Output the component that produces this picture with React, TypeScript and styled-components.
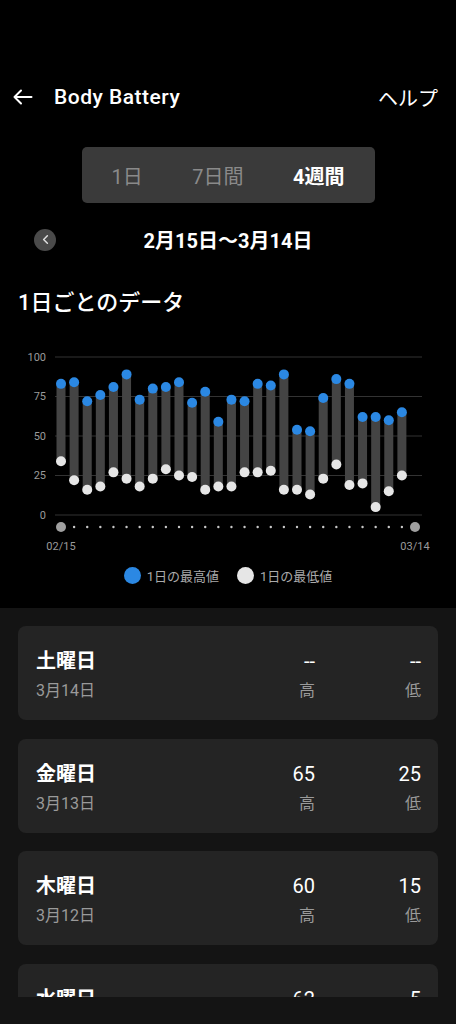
import React from "react";
import styled, { createGlobalStyle } from "styled-components";
import { ChevronLeft } from "lucide-react";

const GlobalStyle = createGlobalStyle`
  html, body { margin: 0; padding: 0; background: #000; }
  body {
    font-family: Roboto, "Noto Sans CJK JP", sans-serif;
    color: #fff;
  }
`;

const Page = styled.div`
  width: 456px;
  height: 1024px;
  display: flex;
  flex-direction: column;
  overflow: hidden;
  background: #000;
`;

const Header = styled.header`
  margin-top: 73px;
  height: 48px;
  display: flex;
  align-items: center;
  justify-content: space-between;
  padding: 0 18px 0 13px;
  flex-shrink: 0;
`;

const HeaderLeft = styled.div`
  display: flex;
  align-items: center;
  gap: 21px;
`;

const Title = styled.h1`
  margin: 0;
  font-size: 21px;
  font-weight: 500;
  letter-spacing: 0.5px;
`;

const HelpLink = styled.span`
  font-size: 20px;
  font-family: "Noto Sans CJK JP", sans-serif;
`;

const Segmented = styled.div`
  margin: 26px auto 0;
  width: 293px;
  height: 56px;
  box-sizing: border-box;
  padding: 0 30px;
  background: #3a3a3a;
  border-radius: 5px;
  display: flex;
  align-items: center;
  justify-content: space-between;
  flex-shrink: 0;
`;

const SegItem = styled.span<{ $active?: boolean }>`
  font-size: 20px;
  color: ${(p) => (p.$active ? "#fff" : "#8a8a8a")};
  font-weight: ${(p) => (p.$active ? 700 : 400)};
`;

const DateRow = styled.div`
  margin-top: 22px;
  height: 24px;
  padding: 0 34px;
  display: grid;
  grid-template-columns: 1fr auto 1fr;
  align-items: center;
  flex-shrink: 0;
`;

const BackCircle = styled.div`
  width: 22px;
  height: 22px;
  border-radius: 50%;
  background: #4a4a4a;
  display: flex;
  align-items: center;
  justify-content: center;
  justify-self: start;
  color: #e0e0e0;
`;

const DateText = styled.span`
  font-size: 20px;
  font-weight: 700;
`;

const Heading = styled.h2`
  margin: 39px 0 0;
  padding-left: 18px;
  font-size: 22px;
  line-height: 30px;
  font-weight: 500;
  flex-shrink: 0;
`;

const ChartSvg = styled.svg`
  display: block;
  margin-top: 12px;
  flex-shrink: 0;
`;

const Legend = styled.div`
  margin-top: 10px;
  height: 18px;
  display: flex;
  justify-content: center;
  align-items: center;
  gap: 18px;
  flex-shrink: 0;
`;

const LegendItem = styled.div`
  display: flex;
  align-items: center;
  gap: 6px;
  font-size: 13px;
  color: #aaa;
`;

const Swatch = styled.span<{ $color: string }>`
  width: 17px;
  height: 17px;
  border-radius: 50%;
  background: ${(p) => p.$color};
`;

const ListSection = styled.section`
  margin-top: 24px;
  flex: 1;
  min-height: 0;
  overflow: hidden;
  background: #141414;
  padding: 18px 18px 0;
  display: flex;
  flex-direction: column;
  gap: 18.5px;
`;

const NavBar = styled.div`
  height: 27px;
  flex-shrink: 0;
  background: #141414;
`;

const Card = styled.div`
  height: 94px;
  flex-shrink: 0;
  box-sizing: border-box;
  padding: 22px 17px 0 18px;
  background: #242424;
  border-radius: 8px;
  display: flex;
`;

const DayCol = styled.div`
  flex: 1;
  display: flex;
  flex-direction: column;
  gap: 6px;
`;

const DayName = styled.span`
  font-size: 20px;
  line-height: 26px;
  font-weight: 700;
`;

const SubText = styled.span`
  font-size: 16px;
  line-height: 22px;
  color: #9a9a9a;
`;

const Stats = styled.div`
  display: flex;
  gap: 46px;
`;

const StatCol = styled.div`
  width: 60px;
  display: flex;
  flex-direction: column;
  align-items: flex-end;
  gap: 6px;
`;

const StatValue = styled.span`
  font-size: 20px;
  line-height: 26px;
`;

const highs = [83, 84, 72, 76, 81, 89, 73, 80, 81, 84, 71, 78, 59, 73, 72, 83, 82, 89, 54, 53, 74, 86, 83, 62, 62, 60, 65];
const lows = [34, 22, 16, 18, 27, 23, 18, 23, 29, 25, 24, 16, 18, 18, 27, 27, 28, 16, 16, 13, 23, 32, 19, 20, 5, 15, 25];

const X0 = 61;
const STEP = (415 - 61) / 27;
const yOf = (v: number) => 185 - 1.58 * v;

const Chart: React.FC = () => {
  const grid = [100, 75, 50, 25, 0];
  return (
    <ChartSvg width={456} height={226} viewBox="0 0 456 226">
      {grid.map((g) => (
        <g key={g}>
          <line x1={55} x2={422} y1={yOf(g)} y2={yOf(g)} stroke="#333" strokeWidth={1} />
          <text
            x={46}
            y={yOf(g)}
            fill="#9a9a9a"
            fontSize={11}
            textAnchor="end"
            dominantBaseline="central"
            fontFamily="Roboto, sans-serif"
          >
            {g}
          </text>
        </g>
      ))}
      {highs.map((h, i) => {
        const cx = X0 + i * STEP;
        const yt = yOf(h);
        const yb = yOf(lows[i]);
        return (
          <g key={i}>
            <rect x={cx - 4.5} y={yt} width={9} height={yb - yt} fill="#444" />
            <circle cx={cx} cy={yt} r={5} fill="#2b88e3" />
            <circle cx={cx} cy={yb} r={5} fill="#e6e6e6" />
          </g>
        );
      })}
      {Array.from({ length: 28 }).map((_, i) => {
        const cx = X0 + i * STEP;
        const big = i === 0 || i === 27;
        return <circle key={i} cx={cx} cy={197} r={big ? 5 : 1.2} fill={big ? "#a0a0a0" : "#c8c8c8"} />;
      })}
      <text x={61} y={216} fill="#9a9a9a" fontSize={11} textAnchor="middle" dominantBaseline="central" fontFamily="Roboto, sans-serif">
        02/15
      </text>
      <text x={415} y={216} fill="#9a9a9a" fontSize={11} textAnchor="middle" dominantBaseline="central" fontFamily="Roboto, sans-serif">
        03/14
      </text>
    </ChartSvg>
  );
};

const days = [
  { name: "土曜日", date: "3月14日", high: "--", low: "--" },
  { name: "金曜日", date: "3月13日", high: "65", low: "25" },
  { name: "木曜日", date: "3月12日", high: "60", low: "15" },
  { name: "水曜日", date: "3月11日", high: "62", low: "5" },
];

export default function App() {
  return (
    <>
      <GlobalStyle />
      <Page>
        <Header>
          <HeaderLeft>
            <svg width="20" height="16" viewBox="0 0 20 16" fill="none" stroke="#fff" strokeWidth={2} strokeLinecap="round" strokeLinejoin="round">
              <path d="M1.5 8 H18.5 M8 1.5 L1.5 8 L8 14.5" />
            </svg>
            <Title>Body Battery</Title>
          </HeaderLeft>
          <HelpLink>ヘルプ</HelpLink>
        </Header>
        <Segmented>
          <SegItem>1日</SegItem>
          <SegItem>7日間</SegItem>
          <SegItem $active>4週間</SegItem>
        </Segmented>
        <DateRow>
          <BackCircle>
            <ChevronLeft size={15} strokeWidth={2.4} />
          </BackCircle>
          <DateText>2月15日～3月14日</DateText>
          <span />
        </DateRow>
        <Heading>1日ごとのデータ</Heading>
        <Chart />
        <Legend>
          <LegendItem>
            <Swatch $color="#2b88e3" />
            1日の最高値
          </LegendItem>
          <LegendItem>
            <Swatch $color="#e6e6e6" />
            1日の最低値
          </LegendItem>
        </Legend>
        <ListSection>
          {days.map((d) => (
            <Card key={d.date}>
              <DayCol>
                <DayName>{d.name}</DayName>
                <SubText>{d.date}</SubText>
              </DayCol>
              <Stats>
                <StatCol>
                  <StatValue>{d.high}</StatValue>
                  <SubText>高</SubText>
                </StatCol>
                <StatCol>
                  <StatValue>{d.low}</StatValue>
                  <SubText>低</SubText>
                </StatCol>
              </Stats>
            </Card>
          ))}
        </ListSection>
        <NavBar />
      </Page>
    </>
  );
}
